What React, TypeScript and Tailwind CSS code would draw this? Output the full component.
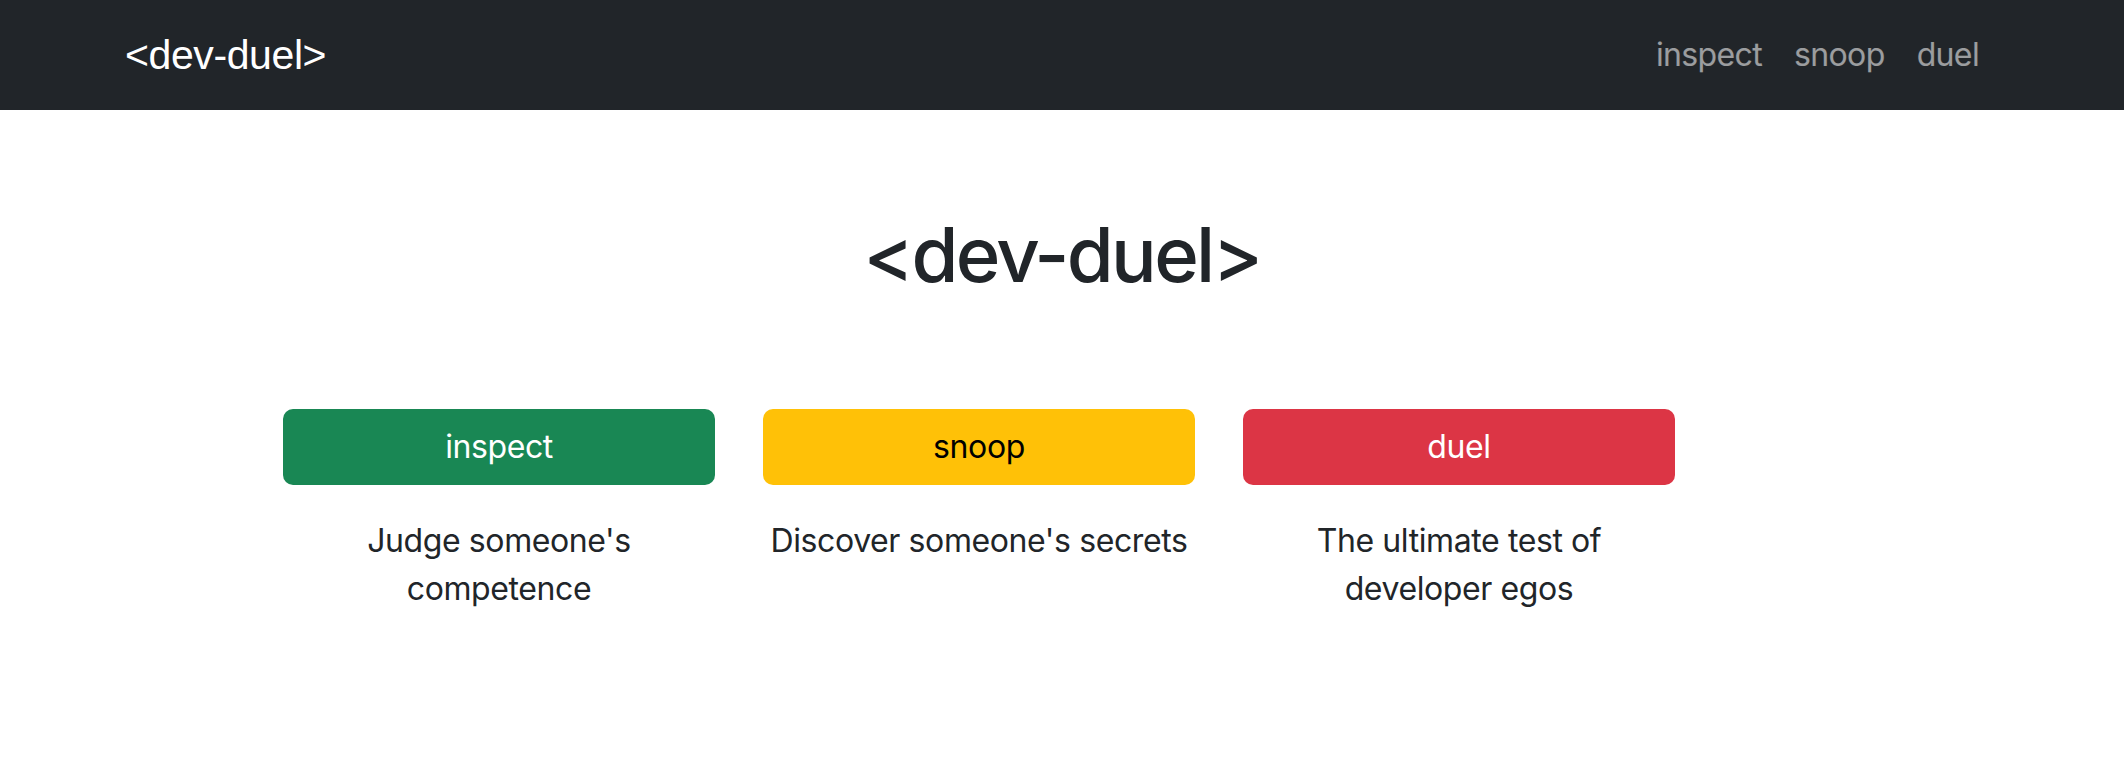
const features = [
  {
    label: "inspect",
    blurb: "Judge someone's competence",
    btn: "bg-[#198754] text-white",
  },
  {
    label: "snoop",
    blurb: "Discover someone's secrets",
    btn: "bg-[#ffc107] text-black",
  },
  {
    label: "duel",
    blurb: "The ultimate test of developer egos",
    btn: "bg-[#dc3545] text-white",
  },
];

const Navbar = () => {
  return (
    <nav className="bg-[#212529] h-[110px] flex items-center justify-between pl-[125px] pr-[129px]">
      <a href="#" className="text-white text-[41px] leading-none font-['Liberation_Sans',Arial,sans-serif]">
        &lt;dev-duel&gt;
      </a>
      <ul className="flex">
        {features.map((f) => (
          <li key={f.label}>
            <a href="#" className="px-4 text-[32px] text-white/55 tracking-[-0.02em]">
              {f.label}
            </a>
          </li>
        ))}
      </ul>
    </nav>
  );
};

export default function App() {
  return (
    <div className="min-h-screen bg-white text-[#212529] font-['Inter',sans-serif] tracking-[-0.025em]">
      <Navbar />
      <main>
        <h1 className="text-center text-[76px] leading-[91px] font-medium mt-[99px] tracking-[-0.035em]">
          &lt;dev-duel&gt;
        </h1>
        <div className="flex gap-12 pl-[283px] mt-[109px]">
          {features.map((f) => (
            <div key={f.label} className="w-[432px] flex flex-col items-center">
              <button className={`w-full h-[76px] rounded-[10px] text-[32px] ${f.btn}`}>
                {f.label}
              </button>
              <p className="mt-8 text-[32px] leading-[48px] text-center">{f.blurb}</p>
            </div>
          ))}
        </div>
      </main>
    </div>
  );
}
